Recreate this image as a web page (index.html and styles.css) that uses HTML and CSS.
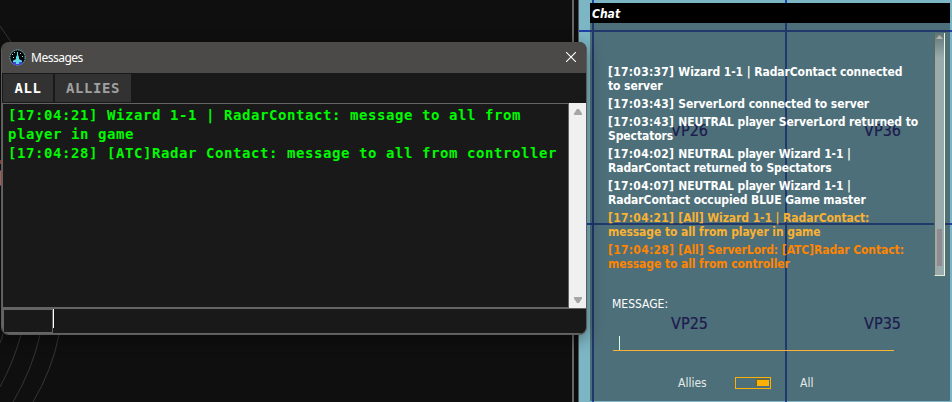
FILE: index.html
```html
<!DOCTYPE html>
<html lang="en">
<head>
<meta charset="utf-8">
<title>Messages</title>
<link rel="stylesheet" href="styles.css">
</head>
<body>
<main class="desktop">
  <section class="radar">
    <svg class="rings" width="572" height="402" fill="none" stroke="#363636" stroke-width="1">
      <path d="M0 26 11 42M0 343Q2 338 3 334M0 387Q13 363 21 335M13 402Q32 370 40 335M33 402Q52 370 59 335"/>
      <path d="M0 162h2" stroke="#b94325" stroke-width="4"/>
      <path d="M0 178h1" stroke="#d96f62" stroke-width="15"/>
    </svg>
  </section>
  <div class="divider"></div>
  <section class="map">
    <svg class="grid" width="373" height="402">
      <g fill="#1f40a8"><path d="M13 0h2v402h-2zM206 0h2v402h-2zM0 30h373v2H0zM0 223h373v2H0z"/></g>
      <g class="waypoint"><text x="92" y="136" textLength="37">VP26</text><text x="285" y="136" textLength="37">VP36</text><text x="92" y="329" textLength="37">VP25</text><text x="285" y="329" textLength="37">VP35</text></g>
    </svg>
  </section>

  <section class="chat">
    <header class="chat-title">Chat</header>
    <div class="chat-history">
      <div class="chat-lines">
        <p><time>[17:03:37] </time>Wizard 1-1 | RadarContact connected<br>to server</p>
        <p><time>[17:03:43] </time>ServerLord connected to server</p>
        <p><time>[17:03:43] </time>NEUTRAL player ServerLord returned to<br>Spectators</p>
        <p><time>[17:04:02] </time>NEUTRAL player Wizard 1-1 |<br>RadarContact returned to Spectators</p>
        <p><time>[17:04:07] </time>NEUTRAL player Wizard 1-1 |<br>RadarContact occupied BLUE Game master</p>
        <p class="player"><time>[17:04:21] </time>[All] Wizard 1-1 | RadarContact:<br>message to all from player in game</p>
        <p class="controller"><time>[17:04:28] </time>[All] ServerLord: [ATC]Radar Contact:<br>message to all from controller</p>
      </div>
      <div class="chat-scroll">
        <svg width="9" height="10"><path d="M1 6 4.5 2 8 6z" fill="#b4b4b0"/></svg>
        <div class="chat-thumb"></div>
      </div>
    </div>
    <div class="chat-label">MESSAGE:</div>
    <div class="chat-input"><i></i></div>
    <div class="chat-target"><span class="allies">Allies</span><div class="switch"><i></i></div><span>All</span></div>
  </section>

  <section class="window">
    <header class="titlebar">
      <svg class="logo" width="17" height="17" viewBox="0 0 17 17">
        <circle cx="8.5" cy="8.5" r="7.6" fill="#050709" stroke="#66bfc6" stroke-dasharray="1.6 .8"/>
        <path d="M4 11h9v3l-2 2H6l-2-2z" fill="#493bed"/>
        <path d="M8 3h1v3l1 2v2l3 2v1h-3v2H7v-2H4v-1l3-2V8l1-2z" fill="#58dce2"/>
        <path d="M3 5h1v1H3zm2-2h1v1H5zm6 1h1v1h-1zm2 3h1v1h-1zM4 8h1v1H4z" fill="#a9d4d4"/>
      </svg>
      <h1>Messages</h1>
      <svg class="close" width="10" height="10" stroke="#fff" stroke-width="1.1"><path d="m0 0 10 10M10 0 0 10"/></svg>
    </header>
    <nav class="tabs"><button class="tab active">ALL</button><button class="tab">ALLIES</button></nav>
    <div class="log">
      <div class="log-text"><p>[17:04:21] Wizard 1-1 | RadarContact: message to all from<br>player in game</p><p>[17:04:28] [ATC]Radar Contact: message to all from controller</p></div>
      <div class="log-scroll">
        <svg width="8" height="6" fill="#a6a6a6"><path d="M0 6V4.5L3 0h2l3 4.5V6z"/></svg>
        <svg width="8" height="6" fill="#a6a6a6"><path d="M0 0v1.5L3 6h2l3-4.5V0z"/></svg>
      </div>
    </div>
    <div class="entry"><div class="recipient"></div><i class="caret"></i></div>
  </section>
</main>
</body>
</html>
```
FILE: styles.css
```css
* { box-sizing: border-box; }
body { margin: 0; }
p, h1 { margin: 0; }
svg { display: block; flex: none; }

.desktop {
  position: relative;
  display: flex;
  width: 952px;
  height: 402px;
  overflow: hidden;
  background: #0e0e0e;
}
.radar { width: 572px; background: #0f0f0f; }
.divider {
  width: 7px;
  background: #0c0c0c;
  border-left: 2px solid #656565;
  border-right: 1px solid #555;
}
.map { width: 373px; background: #7cb5c3; }
.waypoint text {
  font: 16px "DejaVu Sans Condensed", "DejaVu Sans", sans-serif;
  font-stretch: condensed;
  fill: #16006a;
  stroke: #16006a;
  stroke-width: .2px;
}

.chat {
  position: absolute;
  left: 590px;
  top: 3px;
  width: 360px;
  height: 398px;
  background: rgba(35, 49, 54, .53);
  color: #fff;
  font: 12px "DejaVu Sans Condensed", "DejaVu Sans", sans-serif;
  font-stretch: condensed;
}
.chat-title {
  height: 20px;
  padding-left: 2px;
  background: #000;
  font-weight: bold;
  font-style: italic;
  line-height: 22px;
}
.chat-history {
  display: flex;
  justify-content: space-between;
  height: 244px;
  margin-top: 10px;
  padding: 0 5px 0 18px;
}
.chat-lines {
  display: flex;
  flex-direction: column;
  gap: 4px;
  padding-top: 32px;
  font-weight: bold;
  letter-spacing: -.08px;
  line-height: 14px;
  white-space: nowrap;
}
.chat-lines time { letter-spacing: .27px; }
.player { color: #f9b233; }
.controller { color: #ff8500; }
.chat-scroll {
  width: 11px;
  height: 243px;
  background: linear-gradient(#5f7678, #9aabad 25px);
  border-left: 1px solid #5c6a5c;
  border-right: 1px solid #f3f5d5;
  border-bottom: 1px solid #e1ebd5;
}
.chat-thumb {
  width: 5px;
  height: 37px;
  margin: 186px 0 0 2px;
  background: #918b91;
}
.chat-label { margin: 19px 0 0 22px; line-height: 16px; }
.chat-input {
  width: 281px;
  height: 39px;
  margin-left: 23px;
  padding: 24px 0 0 6px;
  border-bottom: 1px solid #f9b233;
}
.chat-input i { display: block; width: 1px; height: 14px; background: #d6ffe0; }
.chat-target {
  display: flex;
  align-items: center;
  height: 16px;
  margin: 24px 0 0 88px;
  color: #e4e9e9;
}
.allies { width: 57px; }
.switch {
  width: 36px;
  height: 12px;
  margin-right: 29px;
  padding: 2px 1px 2px 21px;
  border: 1px solid #ffb000;
}
.switch i {
  display: block;
  width: 12px;
  height: 6px;
  background: #ffb000;
  box-shadow: -1px -1px 1px #6b6330;
}

.window {
  position: absolute;
  left: 1px;
  top: 42px;
  width: 586px;
  height: 293px;
  overflow: hidden;
  border: 1px solid #5c5c5c;
  border-top: 0;
  border-radius: 8px;
  background: #191919;
  box-shadow: 0 4px 16px rgba(0, 0, 0, .4);
}
.titlebar {
  display: flex;
  align-items: center;
  height: 31px;
  margin: 0 -1px;
  padding: 0 11px 0 8px;
  background: #4b4a48;
  color: #fff;
}
.titlebar h1 {
  margin: -1px auto 0 5px;
  font: 12px "Noto Sans", sans-serif;
  letter-spacing: -.5px;
}
.close { margin-top: -1px; }
.tabs { display: flex; gap: 2px; height: 30px; padding: 1px; }
.tab {
  height: 28px;
  padding: 0 11px;
  border: 0;
  background: #323232;
  color: #a0a0a0;
  font: bold 14px "DejaVu Sans Mono", monospace;
  letter-spacing: .572px;
}
.tab.active { width: 50px; color: #fff; }
.log { display: flex; height: 205px; }
.log-text {
  flex: 1;
  padding: 2px 0 0 5px;
  border: 1px solid #646464;
  color: #00fa00;
  font: bold 14px/19px "DejaVu Sans Mono", monospace;
  letter-spacing: .572px;
  white-space: nowrap;
}
.log-scroll {
  display: flex;
  flex-direction: column;
  justify-content: space-between;
  align-items: center;
  width: 17px;
  padding: 6px 0 5px;
  background: #f0f0f0;
}
.entry {
  display: flex;
  height: 26px;
  border-top: 1px solid #646464;
  border-left: 1px solid #646464;
  border-bottom: 1px solid #646464;
}
.recipient { width: 50px; border: 1px solid #646464; }
.caret { width: 1px; height: 19px; background: #fff; }
```
